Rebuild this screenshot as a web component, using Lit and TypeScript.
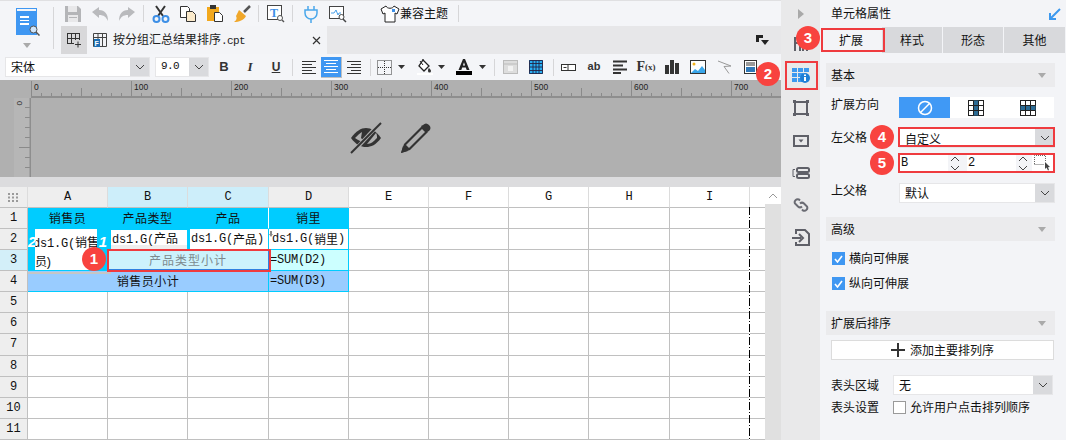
import { LitElement, html, css, svg, unsafeCSS } from "lit";
import { customElement } from "lit/decorators.js";

const COLS = ["A", "B", "C", "D", "E", "F", "G", "H", "I"];
const WIDTHS = [80, 80, 81, 80, 80, 80, 80, 81, 80];
const ROW_H = [21, 21, 21, 21, 21, 21, 22, 21, 21, 21, 21, 21];

const ic = (w: number, h: number, body: unknown) =>
  html`<svg width=${w} height=${h} viewBox="0 0 ${w} ${h}">${body}</svg>`;

const I = {
  save: ic(18, 18, svg`<path d="M1 1h13l3 3v13H1z" fill="#b4b5b8"/><rect x="4" y="1" width="9" height="6" fill="#e8e8ea"/><rect x="4" y="10" width="10" height="7" fill="#e8e8ea"/><rect x="5" y="12" width="8" height="1" fill="#b4b5b8"/>`),
  undo: ic(18, 16, svg`<path d="M1 6l7-5v3c6 0 9 4 9 11-2-4-4-6-9-6v3z" fill="#b9babd"/>`),
  redo: ic(18, 16, svg`<path d="M17 6l-7-5v3C4 4 1 8 1 15c2-4 4-6 9-6v3z" fill="#b9babd"/>`),
  cut: ic(18, 18, svg`<path d="M4 1l7 10M13 1L6 11" stroke="#333" stroke-width="2" fill="none"/><circle cx="4.500" cy="14" r="3" fill="none" stroke="#3d8fe6" stroke-width="2"/><circle cx="13.500" cy="14" r="3" fill="none" stroke="#3d8fe6" stroke-width="2"/>`),
  copy: ic(18, 18, svg`<path d="M1.500 1.500h7l2 2v9h-9z" fill="#fff" stroke="#333"/><path d="M7.500 6.500h6l3 3v7h-9z" fill="#fbeacb" stroke="#333"/>`),
  paste: ic(18, 18, svg`<path d="M1 2h12v14H1z" fill="#f2a81d"/><rect x="4" y="0" width="6" height="4" fill="#333"/><path d="M8.500 7.500h5l3 3v6h-8z" fill="#fff" stroke="#333"/>`),
  brush: ic(18, 18, svg`<path d="M11 7l6-6" stroke="#555" stroke-width="2.500"/><path d="M6 5l7 6c-2 4-7 6-12 6 3-2 3-4 2-6z" fill="#f0a72a"/>`),
  preview: ic(18, 18, svg`<rect x=".5" y=".5" width="14" height="14" fill="#fff" stroke="#444"/><text x="3" y="12" font-size="12" font-weight="700" fill="#3d8fe6" font-family="Liberation Serif">T</text><circle cx="13" cy="13" r="2.500" fill="#fff" stroke="#555"/><path d="M15 15l2 2" stroke="#555" stroke-width="1.500"/>`),
  plug: ic(18, 18, svg`<path d="M3 5h12v3a6 6 0 0 1-12 0z" fill="none" stroke="#49a7ea" stroke-width="1.500"/><path d="M6 1v4M12 1v4M9 14v4" stroke="#49a7ea" stroke-width="1.500"/>`),
  monitor: ic(18, 18, svg`<rect x=".5" y="1.500" width="14" height="12" fill="#fff" stroke="#444"/><path d="M2 8h3l2-3 2 5 1-2h2" stroke="#4aa0e8" fill="none"/><circle cx="12.500" cy="12" r="2.500" fill="#fff" stroke="#444"/><path d="M14 14l3 3" stroke="#444" stroke-width="1.500"/>`),
  shirt: ic(20, 18, svg`<path d="M6 1L1 4l2 5 2-1v9h10V8l2 1 2-5-5-3c-1 3-7 3-8 0z" fill="#fff" stroke="#222"/><rect x="12" y="4" width="3" height="3" fill="#3d8fe6"/>`),
  tablePlus: ic(16, 16, svg`<path d="M1 1.500h13M1 6.500h13M1 11.500h7M1.500 1v11M5.500 1v11M9.500 1v7M13.500 1v7" stroke="#333" fill="none"/><path d="M12 9.500v6M9 12.500h6" stroke="#333"/>`),
  fileTab: ic(14, 14, svg`<path d="M.5.500h13v13H.5zM5 .5v13M9.500.500v13M.5 4.500h13" stroke="#444" fill="none"/><rect x="1" y="6" width="6" height="8" fill="#1b6fb5"/><text x="1.500" y="13" font-size="7" font-weight="700" fill="#fff" font-family="Liberation Sans">F</text>`),
  close: ic(9, 9, svg`<path d="M1 1l7 7M8 1L1 8" stroke="#333" stroke-width="1.200"/>`),
  corner: ic(13, 11, svg`<path d="M0 0h7v3H3v4H0z" fill="#222"/><path d="M5 5h8l-4 5z" fill="#222"/>`),
  chev: ic(10, 6, svg`<path d="M1 1l4 4 4-4" fill="none" stroke="#444"/>`),
  chevUp: ic(10, 6, svg`<path d="M1 5l4-4 4 4" fill="none" stroke="#444"/>`),
  chevUpG: ic(10, 6, svg`<path d="M1 5l4-4 4 4" fill="none" stroke="#999"/>`),
  tri: ic(7, 4, svg`<path d="M0 0h7L3.500 4z" fill="#333"/>`),
  triG: ic(8, 5, svg`<path d="M0 0h8L4 5z" fill="#aaa"/>`),
  border: ic(15, 15, svg`<rect x=".5" y=".5" width="14" height="14" fill="none" stroke="#333" stroke-dasharray="1 1"/><path d="M7.500 1v13M1 7.500h13" stroke="#333" stroke-dasharray="1 1"/>`),
  fill: ic(16, 16, svg`<path d="M6 1l6 6-5 5-5-5z" fill="#fff" stroke="#222" stroke-width="1.300"/><path d="M6 1V0" stroke="#222"/><path d="M3 2l3 4" stroke="#222"/><path d="M12 9c1 1 2 2 2 3a1.500 1.500 0 0 1-3 0c0-1 0-2 1-3z" fill="#333"/><rect x="0" y="14" width="16" height="2" fill="#fff"/>`),
  color: ic(16, 16, svg`<path d="M2.500 11L7 0h2l4.500 11h-2.800l-.9-2.500H6.200L5.300 11zM6.900 6.500h2.200L8 3.300z" fill="#222"/><rect y="12" width="16" height="4" fill="#000"/>`),
  cellDis: ic(15, 14, svg`<rect x=".5" y=".5" width="14" height="13" fill="#ddd" stroke="#bbb"/><path d="M1 4h13" stroke="#bbb"/><rect x="5" y="6" width="5" height="5" fill="#f2f2f2"/>`),
  grid: ic(14, 14, svg`<rect width="14" height="14" fill="#29aef2"/><path d="M.5.500h13v13H.5zM.5 3.500h13M.5 7h13M.5 10.500h13M4 .5v13M7 .5v13M10 .5v13" stroke="#224" fill="none" stroke-width=".9"/>`),
  input: ic(15, 7, svg`<rect x=".5" y=".5" width="14" height="6" fill="#fff" stroke="#333"/><rect x="2.500" y="3" width="3" height="1" fill="#333"/><path d="M7 0v7" stroke="#333"/>`),
  lines: ic(14, 14, svg`<path d="M0 1.500h14M0 5.500h10M0 9.500h14M0 13h8" stroke="#333" stroke-width="2"/>`),
  bars: ic(14, 14, svg`<rect y="5" width="4" height="9" fill="#333"/><rect x="5" width="4" height="14" fill="#333"/><rect x="10" y="3" width="4" height="11" fill="#333"/>`),
  image: ic(16, 14, svg`<rect x=".5" y=".5" width="15" height="13" fill="#fff" stroke="#333"/><circle cx="4" cy="4" r="1.500" fill="#f2b21c"/><path d="M1 13l4-4 3 2 4-5 3 4v3z" fill="#39a6ea"/>`),
  slash: ic(15, 14, svg`<path d="M1 1l13 5-7 .5 5 7" fill="none" stroke="#999"/>`),
  report: ic(13, 14, svg`<rect x=".5" y=".5" width="12" height="13" fill="#fff" stroke="#333"/><path d="M2 3h9M2 5h9" stroke="#333"/><rect x="2" y="7" width="9" height="5" fill="#2f78b8"/>`),
  eye: ic(32, 32, svg`<path d="M1 16c5-7 10-10 15-10s10 3 15 10c-5 7-10 9-15 9S6 23 1 16z" fill="#333"/><path d="M5 16c3-3 5-5 7-6l-1 6 4 4c-4 0-7-2-10-4z" fill="#b0b0b0"/><path d="M27 16c-3 3-6 6-10 6l9-11c1 1 1 4 1 5z" fill="#b0b0b0"/><path d="M3 30L29 2" stroke="#b0b0b0" stroke-width="4"/><path d="M1 31L31 1" stroke="#333" stroke-width="2"/>`),
  pencil: ic(30, 30, svg`<path d="M0 30l3-9L21 3l6 6L9 27z" fill="#333"/><path d="M5 22L21 6l3 3L8 25z" fill="#b0b0b0"/><path d="M22 2c2-2 4-2 6 0s2 4 0 6l-2 1-6-6z" fill="#333"/><path d="M0 30l2-7 5 5z" fill="#333"/>`),
  grip: ic(11, 9, svg`<path d="M0 0h2v2H0zM4 0h2v2H4zM8 0h2v2H8zM0 3.500h2v2H0zM4 3.500h2v2H4zM8 3.500h2v2H8zM0 7h2v2H0zM4 7h2v2H4zM8 7h2v2H8z" fill="#9a9a9a"/>`),
  arrowRight: ic(6, 10, svg`<path d="M0 0l6 5-6 5z" fill="#a9a9a9"/>`),
  arrowPanel: ic(12, 12, svg`<path d="M11 1L2 10M1 5v6h6" fill="none" stroke="#3d99ef" stroke-width="2"/>`),
  railTable: ic(18, 18, svg`<path d="M3 16V3h12v13M8 3v13M11 3v13M3 8h12" fill="none" stroke="#5f6068" stroke-width="2"/>`),
  railCell: ic(18, 15, svg`<path d="M0 0h5v4H0zM6 0h5v4H6zM12 0h5v4h-5zM0 5h5v4H0zM0 10h5v4H0zM6 5h5v4H6zM6 10h5v4H6z" fill="#3d99ef"/><circle cx="13" cy="10" r="5" fill="#1f7fd6"/><rect x="12" y="9" width="2" height="4" fill="#fff"/><rect x="12" y="6.500" width="2" height="1.500" fill="#fff"/>`),
  railFrame: ic(16, 16, svg`<rect x="2" y="2" width="12" height="12" fill="none" stroke="#5f6068" stroke-width="2"/><path d="M0 0h3v3H0zM13 0h3v3h-3zM0 13h3v3H0zM13 13h3v3h-3z" fill="#5f6068"/>`),
  railDrop: ic(16, 12, svg`<rect x="1" y="1" width="14" height="10" fill="none" stroke="#5f6068" stroke-width="2"/><path d="M5.500 4.500h5L8 7.500z" fill="#5f6068"/>`),
  railLayout: ic(18, 12, svg`<path d="M3 2.500H1v7h2" fill="none" stroke="#5f6068"/><rect x="5" y="1" width="12" height="4" rx="1.500" fill="none" stroke="#5f6068" stroke-width="2"/><rect x="5" y="7" width="12" height="4" rx="1.500" fill="none" stroke="#5f6068" stroke-width="2"/>`),
  railLink: ic(16, 16, svg`<path d="M7 3.500l-1-1a3 3 0 0 0-4 4l3 3a3 3 0 0 0 4 0M9 12.500l1 1a3 3 0 0 0 4-4l-3-3a3 3 0 0 0-4 0" fill="none" stroke="#6a6b73" stroke-width="2"/>`),
  railExport: ic(18, 17, svg`<path d="M4 5V1h9l4 4v11H4v-3" fill="none" stroke="#5f6068" stroke-width="2"/><path d="M0 9h9M7 5l4 4-4 4" fill="none" stroke="#5f6068" stroke-width="2"/>`),
  ban: ic(16, 16, svg`<circle cx="8" cy="8" r="6.500" fill="none" stroke="#fff" stroke-width="1.500"/><path d="M3.500 12.500l9-9" stroke="#fff" stroke-width="1.500"/>`),
  dirV: ic(16, 16, svg`<rect x=".5" y=".5" width="15" height="15" fill="#fff" stroke="#222"/><rect x="5.500" y=".5" width="5" height="15" fill="#2b6b94"/><path d="M5.500 1v14M10.500 1v14M1 5.500h14M1 10.500h14" stroke="#222"/>`),
  dirH: ic(16, 16, svg`<rect x=".5" y=".5" width="15" height="15" fill="#fff" stroke="#222"/><rect x=".5" y="5.500" width="15" height="5" fill="#2b6b94"/><path d="M5.500 1v14M10.500 1v14M1 5.500h14M1 10.500h14" stroke="#222"/>`),
  check: ic(9, 8, svg`<path d="M1 4l2.500 3L8 1" fill="none" stroke="#fff" stroke-width="1.600"/>`),
  plus: ic(14, 14, svg`<path d="M7 0v14M0 7h14" stroke="#333" stroke-width="2"/>`),
  picker: ic(18, 16, svg`<path d="M.5 9V.5H11" fill="none" stroke="#666" stroke-dasharray="1 1"/><path d="M.5 9.500H10M11.500 1v6" fill="none" stroke="#666" stroke-dasharray="1 1"/><path d="M11 7l5 5-2 .3 1 2.700-1 .5-1.500-3-1.500 1.500z" fill="#444"/>`),
  logoGlass: ic(11, 11, svg`<circle cx="4.500" cy="4.500" r="3.500" fill="#cfe5fb" stroke="#555"/><path d="M7 7l3.500 3.500" stroke="#555" stroke-width="1.500"/>`),
  mark: ic(4, 6, svg`<path d="M1 0h2v3h1L2 6 0 3h1z" fill="#8a8a8a"/>`),
};

const rulerTop = () => {
  const ticks = [];
  for (let x = 0; x <= 750; x += 10) {
    const h = x % 100 === 0 ? 15 : x % 50 === 0 ? 8 : 3;
    ticks.push(svg`<rect x=${x} y=${16 - h} width="1" height=${h} fill="#8a8a8a"></rect>`);
    if (x % 100 === 0)
      ticks.push(svg`<text x=${x + 3} y="10" font-size="8.500" font-family="Liberation Sans" fill="#222">${x}</text>`);
  }
  return html`<svg class="rtop" width="750" height="18" viewBox="0 0 750 18">${ticks}<rect y="16" width="750" height="2" fill="#8e8e8e"></rect></svg>`;
};

const rulerSide = () => {
  const ticks = [];
  for (let i = 1; i <= 7; i++) {
    const w = i === 5 ? 12 : 6;
    ticks.push(svg`<rect x=${17 - w} y=${i * 10 - 1} width=${w} height="1" fill="#8a8a8a"></rect>`);
  }
  return html`<svg class="rside" width="17" height="80" viewBox="0 0 17 80"><rect width="17" height="80" fill="#b6b6b6"></rect>
    <text transform="translate(3,3) rotate(90)" font-size="8" font-family="Liberation Sans" fill="#222">0</text>
    ${ticks}<rect x="15.500" width="1.500" height="80" fill="#8e8e8e"></rect></svg>`;
};

@customElement("app-root")
export class AppRoot extends LitElement {
  static styles = css`
    :host {
      display: flex;
      width: 1066px;
      height: 440px;
      overflow: hidden;
      font: 12px/1.2 "Noto Sans CJK SC", "Liberation Sans", sans-serif;
      color: #111;
      background: #f3f4f7;
      position: relative;
    }
    svg { display: block; flex: none; }
    .a { font-family: "Liberation Mono", monospace; font-size: 12px; letter-spacing: -0.2px; }
    .a6 { font-family: "Liberation Mono", monospace; font-size: 11px; letter-spacing: -0.6px; }

    .g2 { width: 2px; flex: none; } .g3 { width: 3px; flex: none; } .g4 { width: 4px; flex: none; }
    .g5 { width: 5px; flex: none; } .g6 { width: 6px; flex: none; } .g7 { width: 7px; flex: none; }
    .g8 { width: 8px; flex: none; } .g9 { width: 9px; flex: none; } .g10 { width: 10px; flex: none; }
    .g11 { width: 11px; flex: none; } .g12 { width: 12px; flex: none; }

    .main { width: 781px; display: flex; flex-direction: column; flex: none; }
    .head { display: flex; height: 54px; background: #f4f5f8; border-top: 1px solid #e0e0e2; box-sizing: border-box; }
    .logo { width: 53px; flex: none; display: flex; flex-direction: column; align-items: center; padding-top: 7px; box-sizing: border-box; }
    .logoDoc { width: 21px; height: 24px; margin-top: 3px; background: #3f97f2; position: relative; box-shadow: 0 -3px 0 -1px #f4f5f8, 0 -3px 0 0 #3f97f2; display: flex; flex-direction: column; gap: 2px; padding: 5px 4px; box-sizing: border-box; }
    .logoDoc i { display: block; height: 1.500px; width: 9px; background: #fff; }
    .logoDoc svg { position: absolute; right: -3px; bottom: -1px; }
    .logoTri { margin-top: 8px; }
    .logoSep { width: 1px; height: 42px; background: #d6d6d8; margin: 6px 7px 0 0; flex: none; }
    .headR { flex: 1; display: flex; flex-direction: column; min-width: 0; }
    .tools { height: 25px; display: flex; align-items: center; margin-left: -2px; }
    .t { width: 27px; display: flex; justify-content: center; flex: none; }
    .sep { width: 1px; height: 17px; background: #d6d6d8; flex: none; }
    .theme { display: flex; align-items: center; margin-left: 29px; margin-right: 10px; color: #111; }
    .tabs { height: 28px; background: #e7e7e9; display: flex; align-items: center; }
    .tabAdd { width: 26px; height: 28px; background: #d8d8da; display: flex; align-items: center; justify-content: center; flex: none; }
    .tabOn { width: 240px; height: 28px; background: #f3f4f7; display: flex; align-items: center; padding: 0 6px 0 6px; box-sizing: border-box; gap: 6px; flex: none; color: #222; }
    .tabOn .name { flex: 1; }
    .tabCorner { margin-left: auto; margin-right: 12px; }

    .fmtbar { height: 26px; background: #f4f5f8; display: flex; align-items: center; padding-left: 5px; }
    .sel { display: flex; background: #fff; height: 20px; align-items: center; flex: none; box-sizing: border-box; border: 1px solid #e6e6e8; }
    .sel .val { flex: 1; padding-left: 5px; white-space: nowrap; }
    .sel .btn { width: 19px; height: 100%; background: #d9dadd; display: flex; align-items: center; justify-content: center; flex: none; }
    .f1 { width: 145px; }
    .f2 { width: 54px; margin-left: 5px; }
    .fmt { width: 26px; height: 21px; flex: none; display: flex; align-items: center; justify-content: center; font-family: "Liberation Sans", sans-serif; font-size: 13px; color: #333; }
    .fmt.b { font-weight: 700; }
    .fmt.i { font-style: italic; font-family: "Liberation Serif", serif; font-weight: 700; }
    .fmt.u { text-decoration: underline; font-weight: 700; font-size: 12px; }
    .fmt.ab { font-weight: 700; font-size: 11px; }
    .fmt.fx { font-family: "Liberation Serif", serif; font-weight: 700; font-size: 14px; }
    .fmt.fx small { font-size: 9px; }
    .alg { height: 21px; display: flex; flex-direction: column; justify-content: center; gap: 2px; flex: none; }
    .alg i { display: block; height: 1px; width: 14px; background: #333; }
    .alg .s { width: 10px; }
    .alg.l { width: 19px; }
    .alg.c { width: 21px; align-items: center; background: #3f97f2; }
    .alg.c i { background: #fff; }
    .alg.r { width: 15px; align-items: flex-end; margin-left: 4px; }
    .fmtsep { width: 1px; height: 17px; background: #d6d6d8; flex: none; }
    .ms3 { margin-left: 3px; }
    .ms9 { margin-left: 9px; }

    .ruler { height: 97px; background: #b0b0b0; flex: none; display: grid; grid-template-columns: 14px 17px 1fr; grid-template-rows: 18px 79px; }
    .rtop { grid-column: 3; grid-row: 1; }
    .rsidew { grid-column: 2; grid-row: 2; overflow: hidden; }
    .canvas { grid-column: 3; grid-row: 2; display: flex; align-items: center; gap: 19px; padding-left: 319px; }

    .gap { height: 10px; background: #dcdcde; flex: none; }
    .sheetW { flex: 1; position: relative; display: flex; overflow: hidden; background: #fff; }
    .sheet { display: grid; grid-template-columns: 28px ${unsafeCSS(WIDTHS.map((w) => w + "px").join(" "))} 15px; grid-template-rows: ${unsafeCSS([21, ...ROW_H].map((h) => h + "px").join(" "))}; flex: none; font-size: 12px; }
    .c { border-right: 1px solid #c0c0c0; border-bottom: 1px solid #c0c0c0; box-sizing: border-box; display: flex; align-items: center; justify-content: center; overflow: hidden; white-space: nowrap; }
    .hd { background: #fff; border-right-color: #dcdcdc; font-family: "Liberation Mono", monospace; font-size: 12px; }
    .hdA { background: #eeeeee; }
    .hdS { background: #cdeefa; }
    .rh { background: #eeeeee; font-family: "Liberation Mono", monospace; font-size: 12px; }
    .rhS { background: #d3eff9; }
    .end { border-right: 0; }
    .k { border-color: #00ccff; }
    .kb { background: #00ccff; letter-spacing: .5px; }
    .kw { border-right-color: #fff; }
    .kl { background: #ccffff; justify-content: flex-start; padding-left: 1px; }
    .kd { background: #99ccff; letter-spacing: .5px; }
    .kd2 { justify-content: flex-start; padding-left: 1px; letter-spacing: 0; }
    .w { background: #fff; justify-content: flex-start; padding-left: 3px; position: relative; }
    .w svg { position: absolute; left: 0; top: 2px; }
    .sub { background: #ccf2fc; color: #7c8a8e; letter-spacing: 1px; }
    .a2 { grid-row: span 2; background: #00ccff; padding: 0 10px 0 7px; position: relative; align-items: stretch; justify-content: stretch; }
    .a2in { background: #fff; flex: 1; padding-top: 5px; line-height: 16.500px; overflow: hidden; }
    .a2in .a { margin-left: -2px; }
    .cn { position: absolute; top: 4px; font: italic 700 15px "Liberation Sans", sans-serif; color: #fff; }
    .cnL { left: 0; }
    .cnR { right: 0; }
    .b2 { background: #00ccff; padding: 1px 0 0 3px; align-items: stretch; justify-content: stretch; }
    .b2in { background: #fff; flex: 1; line-height: 15px; padding-left: 1px; overflow: hidden; box-shadow: inset 0 -4px 0 #eeeeee; }
    .c2 { background: #00ccff; padding: 0 0 0 2px; align-items: stretch; justify-content: stretch; }
    .c2in { background: #fff; flex: 1; display: flex; align-items: center; padding-left: 1px; overflow: hidden; }
    .scroll { width: 16px; background: #e0e0e0; flex: none; display: flex; flex-direction: column; }
    .scrollUp { height: 17px; background: #fff; display: flex; align-items: center; justify-content: center; flex: none; }
    .dash { position: absolute; left: 749px; top: 20px; bottom: 0; width: 1px; background: repeating-linear-gradient(to bottom, #000 0 8px, #fff 8px 10px, #000 10px 11px, #fff 11px 13px); }
    .selBlue { position: absolute; left: 108px; top: 63px; width: 161px; height: 20px; border: 1px solid #2f80e0; box-sizing: border-box; }
    .selShadow { position: absolute; left: 28px; top: 85px; width: 83px; height: 2px; background: #c6c6c6; }

    .rail { width: 39px; flex: none; background: #e9e9ea; display: flex; flex-direction: column; align-items: center; }
    .r { display: flex; align-items: center; justify-content: center; flex: none; width: 100%; }
    .h27 { height: 27px; } .h29 { height: 29px; } .h31 { height: 31px; } .h32 { height: 32px; } .h34 { height: 34px; } .h35 { height: 35px; }

    .panel { width: 246px; flex: none; background: #f3f4f7; display: flex; flex-direction: column; }
    .ptitle { height: 27px; display: flex; align-items: center; justify-content: space-between; padding: 0 5px 0 11px; box-sizing: border-box; flex: none; }
    .ptabs { height: 26px; display: grid; grid-template-columns: 61px 61px 61px 62px; margin-left: 1px; flex: none; background: #d8d9dc; }
    .ptab { display: flex; align-items: center; justify-content: center; border-right: 1px solid #f3f4f7; }
    .ptab.on { background: #f3f4f7; }
    .sec { height: 24px; margin: 0 11px 0 6px; background: #ebebed; display: flex; align-items: center; justify-content: space-between; padding: 0 9px 0 5px; flex: none; }
    .row { display: flex; align-items: center; padding-left: 11px; flex: none; }
    .mt5 { margin-top: 5px; } .mt6 { margin-top: 6px; } .mt10 { margin-top: 10px; } .mt11 { margin-top: 11px; }
    .mt12 { margin-top: 12px; } .mt14 { margin-top: 14px; } .mt15 { margin-top: 15px; } .mt21 { margin-top: 21px; }
    .lab { width: 68px; flex: none; }
    .up1 { position: relative; top: -1px; }
    .up3 { position: relative; top: -3px; }
    .lab62 { width: 62px; flex: none; }
    .dirs { width: 155px; height: 21px; display: grid; grid-template-columns: 51px 52px 52px; background: #fff; }
    .dirs div { display: flex; align-items: center; justify-content: center; }
    .dirs .on { background: #4099f5; }
    .psel { width: 156px; }
    .psel160 { width: 160px; }
    .dn { position: relative; top: 1px; }
    .spin { display: flex; align-items: center; height: 20px; margin-left: 1px; }
    .sp { display: flex; height: 18px; background: #fff; align-items: center; }
    .sp1 { width: 62px; }
    .sp2 { width: 63px; }
    .sp .a { flex: 1; padding-left: 1px; }
    .sparrows { width: 14px; display: flex; flex-direction: column; height: 100%; background: #f3f4f7; align-items: center; justify-content: space-around; }
    .pick { width: 22px; height: 18px; background: #fff; margin-left: 2px; display: flex; align-items: center; justify-content: center; }
    .chk { height: 13px; gap: 4px; padding-left: 12px; }
    .chk2 { height: 13px; gap: 0; }
    .box { width: 13px; height: 13px; background: #3f97f2; display: flex; align-items: center; justify-content: center; flex: none; }
    .box.off { background: #fff; border: 1px solid #9a9a9a; box-sizing: border-box; margin-right: 4px; }
    .add { margin: 5px 12px 0 11px; height: 20px; background: #fff; border: 1px solid #dcdcdc; box-sizing: border-box; display: flex; align-items: center; justify-content: center; gap: 5px; flex: none; }

    .red { position: absolute; border: 2px solid #ef3b3f; box-sizing: border-box; pointer-events: none; }
    .rb1 { left: 107px; top: 249px; width: 164px; height: 23px; }
    .rb2 { left: 785px; top: 61px; width: 33px; height: 29px; }
    .rb3 { left: 821px; top: 28px; width: 64px; height: 24px; }
    .rb4 { left: 898px; top: 127px; width: 157px; height: 20px; }
    .rb5 { left: 898px; top: 153px; width: 157px; height: 20px; }
    .badge { position: absolute; width: 24px; height: 24px; border-radius: 50%; background: #f8433f; color: #fff; font: 700 15px/24px "Liberation Sans", sans-serif; text-align: center; }
    .b1 { left: 82px; top: 247px; }
    .b2p { left: 756px; top: 62px; }
    .b3 { left: 796px; top: 26px; }
    .b4 { left: 870px; top: 125px; }
    .b5 { left: 870px; top: 151px; }
  `;

  private align(kind: string) {
    return html`<div class="alg ${kind}"><i></i><i class="s"></i><i></i><i class="s"></i><i></i></div>`;
  }

  private sheet() {
    const cells: unknown[] = [];
    cells.push(html`<div class="c hd hdA">${I.grip}</div>`);
    COLS.forEach((l, i) => {
      const cls = i < 4 ? (i === 1 || i === 2 ? "hdS" : "hdA") : "";
      cells.push(html`<div class="c hd ${cls}">${l}</div>`);
    });
    cells.push(html`<div class="c hd end"></div>`);

    const blank = (n: number) => {
      for (let i = 0; i < n; i++) cells.push(html`<div class="c"></div>`);
      cells.push(html`<div class="c end"></div>`);
    };

    ROW_H.forEach((_, r) => {
      const n = r + 1;
      cells.push(html`<div class="c rh ${n === 3 ? "rhS" : ""}">${n}</div>`);
      if (n === 1) {
        cells.push(html`<div class="c k kb">销售员</div>`);
        cells.push(html`<div class="c k kb">产品类型</div>`);
        cells.push(html`<div class="c k kb kw">产品</div>`);
        cells.push(html`<div class="c k kb">销里</div>`);
        blank(5);
      } else if (n === 2) {
        cells.push(html`<div class="c k a2"><span class="cn cnL">2</span><div class="a2in"><span class="a">ds1.G(</span>销售<br />员<span class="a">)</span></div><span class="cn cnR">1</span></div>`);
        cells.push(html`<div class="c k b2"><div class="b2in"><span class="a">ds1.G(</span>产品</div></div>`);
        cells.push(html`<div class="c k c2"><div class="c2in"><span class="a">ds1.G(</span>产品<span class="a">)</span></div></div>`);
        cells.push(html`<div class="c k w">${I.mark}<span class="a">ds1.G(</span>销里<span class="a">)</span></div>`);
        blank(5);
      } else if (n === 3) {
        cells.push(html`<div class="c k sub" style="grid-column: span 2">产品类型小计</div>`);
        cells.push(html`<div class="c k kl"><span class="a">=SUM(D2)</span></div>`);
        blank(5);
      } else if (n === 4) {
        cells.push(html`<div class="c k kd" style="grid-column: span 3">销售员小计</div>`);
        cells.push(html`<div class="c k kd kd2"><span class="a">=SUM(D3)</span></div>`);
        blank(5);
      } else {
        blank(9);
      }
    });
    return cells;
  }

  render() {
    return html`
      <div class="main">
        <div class="head">
          <div class="logo">
            <div class="logoDoc"><i></i><i></i><i></i>${I.logoGlass}</div>
            <div class="logoTri">${I.triG}</div>
          </div>
          <div class="logoSep"></div>
          <div class="headR">
            <div class="tools">
              <div class="t">${I.save}</div><div class="t">${I.undo}</div><div class="t">${I.redo}</div>
              <div class="sep ms3"></div>
              <div class="g3"></div>
              <div class="t">${I.cut}</div><div class="t">${I.copy}</div><div class="t">${I.paste}</div><div class="t">${I.brush}</div>
              <div class="sep ms3"></div>
              <div class="g3"></div>
              <div class="t">${I.preview}</div>
              <div class="sep ms3"></div>
              <div class="g4"></div>
              <div class="t">${I.plug}</div><div class="t">${I.monitor}</div>
              <div class="theme">${I.shirt}<span>兼容主题</span></div>
              <div class="sep"></div>
            </div>
            <div class="tabs">
              <div class="tabAdd">${I.tablePlus}</div>
              <div class="tabOn">${I.fileTab}<span class="name">按分组汇总结果排序<span class="a6">.cpt</span></span>${I.close}</div>
              <div class="tabCorner">${I.corner}</div>
            </div>
          </div>
        </div>
        <div class="fmtbar">
          <div class="sel f1"><span class="val">宋体</span><span class="btn">${I.chev}</span></div>
          <div class="sel f2"><span class="val a6">9.0</span><span class="btn">${I.chev}</span></div>
          <div class="g2"></div>
          <div class="fmt b">B</div><div class="fmt i">I</div><div class="fmt u">U</div>
          <div class="fmtsep ms3"></div>
          <div class="g9"></div>
          ${this.align("l")}${this.align("c")}${this.align("r")}
          <div class="fmtsep ms9"></div>
          <div class="g6"></div>${I.border}<div class="g6"></div>${I.tri}
          <div class="g12"></div>${I.fill}<div class="g5"></div>${I.tri}
          <div class="g11"></div>${I.color}<div class="g7"></div>${I.tri}
          <div class="g8"></div><div class="fmtsep"></div>
          <div class="g8"></div>${I.cellDis}<div class="g11"></div>${I.grid}
          <div class="g10"></div><div class="fmtsep"></div>
          <div class="g7"></div>${I.input}<div class="g5"></div>
          <div class="fmt ab">ab</div>
          <div class="fmt">${I.lines}</div>
          <div class="fmt fx">F<small>(x)</small></div>
          <div class="fmt">${I.bars}</div>
          <div class="fmt">${I.image}</div>
          <div class="fmt">${I.slash}</div>
          <div class="fmt">${I.report}</div>
        </div>
        <div class="ruler">
          ${rulerTop()}
          <div class="rsidew">${rulerSide()}</div>
          <div class="canvas">${I.eye}${I.pencil}</div>
        </div>
        <div class="gap"></div>
        <div class="sheetW">
          <div class="sheet">${this.sheet()}</div>
          <div class="scroll"><div class="scrollUp">${I.chevUpG}</div></div>
          <div class="dash"></div>
          <div class="selShadow"></div>
          <div class="selBlue"></div>
        </div>
      </div>

      <div class="rail">
        <div class="r h27">${I.arrowRight}</div>
        <div class="r h34">${I.railTable}</div>
        <div class="r h29">${I.railCell}</div>
        <div class="r h35">${I.railFrame}</div>
        <div class="r h32">${I.railDrop}</div>
        <div class="r h31">${I.railLayout}</div>
        <div class="r h34">${I.railLink}</div>
        <div class="r h31">${I.railExport}</div>
      </div>

      <div class="panel">
        <div class="ptitle"><span>单元格属性</span>${I.arrowPanel}</div>
        <div class="ptabs">
          <div class="ptab on">扩展</div><div class="ptab">样式</div><div class="ptab">形态</div><div class="ptab">其他</div>
        </div>
        <div class="sec mt10"><span>基本</span>${I.triG}</div>
        <div class="row mt10">
          <span class="lab up3">扩展方向</span>
          <div class="dirs"><div class="on">${I.ban}</div><div>${I.dirV}</div><div>${I.dirH}</div></div>
        </div>
        <div class="row mt10">
          <span class="lab up1">左父格</span>
          <div class="sel psel"><span class="val dn">自定义</span><span class="btn">${I.chev}</span></div>
        </div>
        <div class="row mt5">
          <span class="lab"></span>
          <div class="spin">
            <div class="sp sp1"><span class="a">B</span><span class="sparrows">${I.chevUp}${I.chev}</span></div>
            <div class="g5"></div>
            <div class="sp sp2"><span class="a">2</span><span class="sparrows">${I.chevUp}${I.chev}</span></div>
            <div class="pick">${I.picker}</div>
          </div>
        </div>
        <div class="row mt10">
          <span class="lab up3">上父格</span>
          <div class="sel psel"><span class="val">默认</span><span class="btn">${I.chev}</span></div>
        </div>
        <div class="sec mt14"><span>高级</span>${I.triG}</div>
        <div class="row chk mt11"><span class="box">${I.check}</span>横向可伸展</div>
        <div class="row chk mt12"><span class="box">${I.check}</span>纵向可伸展</div>
        <div class="sec mt21"><span>扩展后排序</span>${I.triG}</div>
        <div class="add">${I.plus}<span>添加主要排列序</span></div>
        <div class="row mt15">
          <span class="lab62">表头区域</span>
          <div class="sel psel160"><span class="val">无</span><span class="btn">${I.chev}</span></div>
        </div>
        <div class="row chk2 mt6">
          <span class="lab62">表头设置</span>
          <span class="box off"></span><span>允许用户点击排列顺序</span>
        </div>
      </div>

      <div class="red rb1"></div>
      <div class="red rb2"></div>
      <div class="red rb3"></div>
      <div class="red rb4"></div>
      <div class="red rb5"></div>
      <div class="badge b1">1</div>
      <div class="badge b2p">2</div>
      <div class="badge b3">3</div>
      <div class="badge b4">4</div>
      <div class="badge b5">5</div>
    `;
  }
}
